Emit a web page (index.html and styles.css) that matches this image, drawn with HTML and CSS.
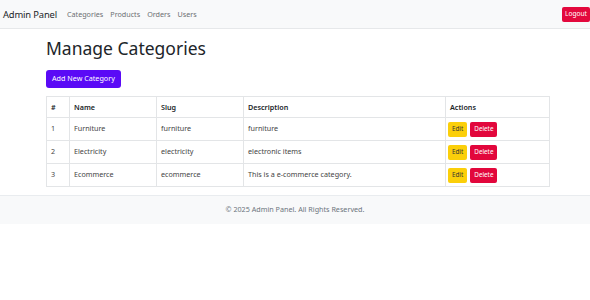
FILE: index.html
```html
<!DOCTYPE html>
<html>
<head>
<meta charset="utf-8">
<link rel="stylesheet" href="styles.css">
</head>
<body>
<nav class="navbar">
  <div class="nav-left">
    <span class="brand">Admin Panel</span>
    <a class="nav-link">Categories</a>
    <a class="nav-link">Products</a>
    <a class="nav-link">Orders</a>
    <a class="nav-link">Users</a>
  </div>
  <button class="btn btn-logout">Logout</button>
</nav>
<main class="container">
  <h1 class="title">Manage Categories</h1>
  <button class="btn btn-add">Add New Category</button>
  <table class="table">
    <colgroup>
      <col class="c-id"><col class="c-name"><col class="c-slug"><col class="c-desc"><col class="c-act">
    </colgroup>
    <thead>
      <tr><th>#</th><th>Name</th><th>Slug</th><th>Description</th><th>Actions</th></tr>
    </thead>
    <tbody>
      <tr><td>1</td><td>Furniture</td><td>furniture</td><td>furniture</td><td class="actions"><span class="btn btn-edit">Edit</span><span class="btn btn-del">Delete</span></td></tr>
      <tr><td>2</td><td>Electricity</td><td>electricity</td><td>electronic items</td><td class="actions"><span class="btn btn-edit">Edit</span><span class="btn btn-del">Delete</span></td></tr>
      <tr><td>3</td><td>Ecommerce</td><td>ecommerce</td><td>This is a e-commerce category.</td><td class="actions"><span class="btn btn-edit">Edit</span><span class="btn btn-del">Delete</span></td></tr>
    </tbody>
  </table>
</main>
<footer class="footer">© 2025 Admin Panel. All Rights Reserved.</footer>
</body>
</html>
```
FILE: styles.css
```css
* { box-sizing: border-box; }
body {
  margin: 0;
  font-family: "Noto Sans", "DejaVu Sans", sans-serif;
  color: #212529;
  background: #fff;
}
.navbar {
  display: flex;
  align-items: center;
  justify-content: space-between;
  height: 29px;
  padding: 0 0 0 3px;
  background: #f8f9fa;
  border-bottom: 1px solid #e6e8ea;
}
.nav-left { display: flex; align-items: center; }
.brand { font-size: 9.4px; letter-spacing: -0.15px; color: #212529; margin-right: 10px; }
.nav-link { font-size: 7.2px; color: #6c6f72; margin-right: 7px; }
.btn {
  display: inline-block;
  border: none;
  border-radius: 2px;
  font-family: inherit;
  color: #fff;
  line-height: 1;
}
.btn-logout {
  background: #e3093d;
  font-size: 6.6px;
  padding: 0 3px;
  height: 15px;
  margin-top: 1px;
}
.container { padding: 0 40px 0 46px; }
.title {
  font-size: 17.5px;
  font-weight: 400;
  margin: 0;
  padding-top: 9px;
  height: 41px;
  line-height: 1.2;
}
.btn-add {
  display: block;
  background: #5a0af6;
  font-size: 7.2px;
  height: 18px;
  padding: 0 6px;
  border-radius: 3px;
  margin: 0;
}
.table {
  margin-top: 8px;
  width: 504px;
  border-collapse: collapse;
  table-layout: fixed;
  font-size: 7.2px;
}
.c-id { width: 23px; }
.c-name { width: 87px; }
.c-slug { width: 87px; }
.c-desc { width: 202px; }
.table th, .table td {
  border: 1px solid #e3e5e7;
  text-align: left;
  padding: 0 4px;
  height: 23px;
}
.table th { height: 21px; font-weight: 600; color: #212529; }
.table td { color: #444; vertical-align: top; padding-top: 5px; }
.table td.actions { padding-top: 4px; padding-left: 2px; }
.btn-edit { background: #fbcf0a; color: #333; font-size: 6.3px; padding: 4px 4px; height: 15px; margin-right: 3px; }
.btn-del { background: #e2073c; font-size: 6.3px; padding: 4px 4px; height: 15px; }
.footer {
  margin-top: 8px;
  height: 29px;
  background: #f8f9fa;
  border-top: 1px solid #e9ecef;
  text-align: center;
  font-size: 7.2px;
  color: #6c757d;
  line-height: 27px;
}
```
